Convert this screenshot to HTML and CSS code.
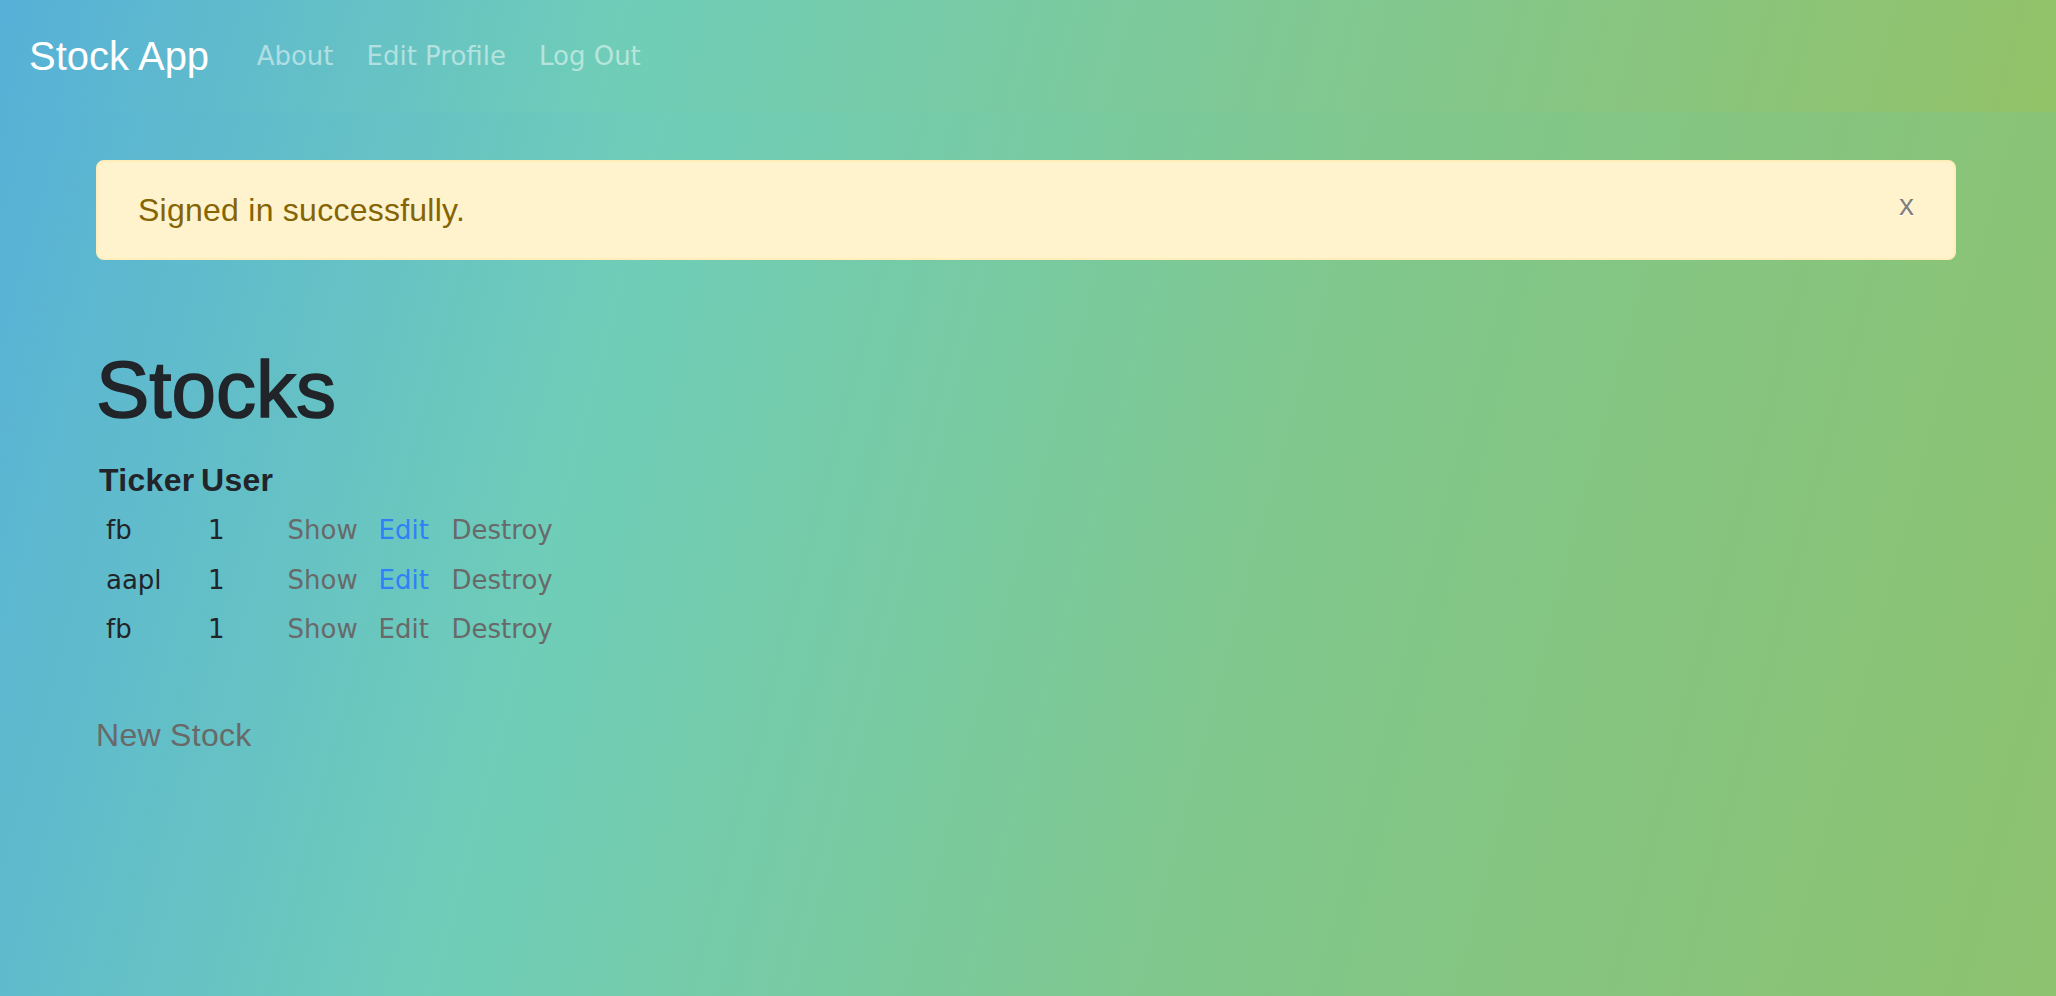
FILE: index.html
```html
<!DOCTYPE html>
<html lang="en">
<head>
<meta charset="utf-8">
<title>Stock App</title>
<link rel="stylesheet" href="styles.css">
</head>
<body>
<nav class="navbar">
  <a class="brand" href="#">Stock App</a>
  <ul class="nav">
    <li><a class="nav-link" href="#">About</a></li>
    <li><a class="nav-link" href="#">Edit Profile</a></li>
    <li><a class="nav-link" href="#">Log Out</a></li>
  </ul>
</nav>
<main class="container">
  <div class="alert">
    Signed in successfully.
    <button class="close" type="button">x</button>
  </div>
  <h1 class="title">Stocks</h1>
  <table class="stocks">
    <colgroup>
      <col class="c-ticker">
      <col class="c-user">
      <col class="c-show">
      <col class="c-edit">
      <col class="c-destroy">
    </colgroup>
    <thead>
      <tr><th>Ticker</th><th>User</th><th colspan="3"></th></tr>
    </thead>
    <tbody>
      <tr>
        <td class="t-ticker">fb</td><td class="t-user">1</td>
        <td class="t-show"><a class="link-grey" href="#">Show</a></td>
        <td><a class="link-blue" href="#">Edit</a></td>
        <td><a class="link-grey" href="#">Destroy</a></td>
      </tr>
      <tr>
        <td class="t-ticker">aapl</td><td class="t-user">1</td>
        <td class="t-show"><a class="link-grey" href="#">Show</a></td>
        <td><a class="link-blue" href="#">Edit</a></td>
        <td><a class="link-grey" href="#">Destroy</a></td>
      </tr>
      <tr>
        <td class="t-ticker">fb</td><td class="t-user">1</td>
        <td class="t-show"><a class="link-grey" href="#">Show</a></td>
        <td><a class="link-grey" href="#">Edit</a></td>
        <td><a class="link-grey" href="#">Destroy</a></td>
      </tr>
    </tbody>
  </table>
  <a class="new-link" href="#">New Stock</a>
</main>
</body>
</html>
```
FILE: styles.css
```css
html {
  height: 100%;
  background: linear-gradient(105deg, #56b0d8 0%, #6fcdb8 30%, #80c78c 62%, #8dc26f 100%);
}

body {
  margin: 0;
  min-height: 100%;
  font-family: "Liberation Sans", Arial, sans-serif;
  font-size: 32px;
  line-height: 48px;
  color: #212529;
}

a {
  text-decoration: none;
}

.navbar {
  display: flex;
  align-items: center;
  height: 112px;
  box-sizing: border-box;
  padding: 16px 30px 16px 29px;
  background: linear-gradient(105deg, #56b0d8 0%, #6fcdb8 30%, #93c268 100%);
}

.brand {
  font-size: 40px;
  line-height: 60px;
  padding: 10px 0;
  margin-right: 31px;
  color: #ffffff;
}

.nav {
  display: flex;
  list-style: none;
  margin: 0;
  padding: 0;
}

.nav-link {
  display: block;
  padding: 0 16.5px;
  font-family: "DejaVu Sans", Verdana, sans-serif;
  font-size: 26px;
  line-height: 48px;
  color: rgba(255, 255, 255, 0.5);
}

.container {
  max-width: 1860px;
  margin-left: 96px;
}

.alert {
  position: relative;
  margin-top: 48px;
  padding: 24px 128px 24px 40px;
  background: #fff3cd;
  border: 2px solid #ffeeba;
  border-radius: 8px;
  color: #856404;
  line-height: 48px;
  letter-spacing: 0.25px;
}

.close {
  position: absolute;
  top: 0;
  right: 0;
  padding: 19px 40px 0 0;
  margin: 0;
  border: 0;
  background: transparent;
  font-family: "Liberation Sans", Arial, sans-serif;
  font-size: 30px;
  line-height: 48px;
  color: rgba(0, 0, 0, 0.5);
  text-shadow: 0 1px 0 #ffffff;
  cursor: pointer;
}

.title {
  margin: 82px 0 16px;
  font-size: 80px;
  line-height: 96px;
  font-weight: 500;
  color: #212529;
  -webkit-text-stroke: 1.6px #212529;
}

.stocks {
  border-collapse: collapse;
  table-layout: fixed;
  width: 474px;
}

.c-ticker { width: 102px; }
.c-user { width: 77px; }
.c-show { width: 92px; }
.c-edit { width: 73px; }
.c-destroy { width: 130px; }

.stocks th {
  padding: 0 0 0 3px;
  text-align: left;
  font-weight: 700;
  font-size: 32px;
  line-height: 52px;
  letter-spacing: 0.3px;
  color: #212529;
}

.stocks td {
  padding: 0 11.5px;
  font-family: "DejaVu Sans", Verdana, sans-serif;
  font-size: 26px;
  line-height: 49.5px;
  color: #212529;
  white-space: nowrap;
}

.stocks td.t-ticker { padding-left: 10px; }
.stocks td.t-user { padding-left: 10px; }
.stocks td.t-show { padding-left: 12.5px; }

.link-grey { color: #696969; }
.link-blue { color: #2f80f7; }

.new-link {
  display: inline-block;
  margin-top: 56px;
  color: #696969;
  font-size: 32px;
  line-height: 48px;
  letter-spacing: 0.3px;
}
```
